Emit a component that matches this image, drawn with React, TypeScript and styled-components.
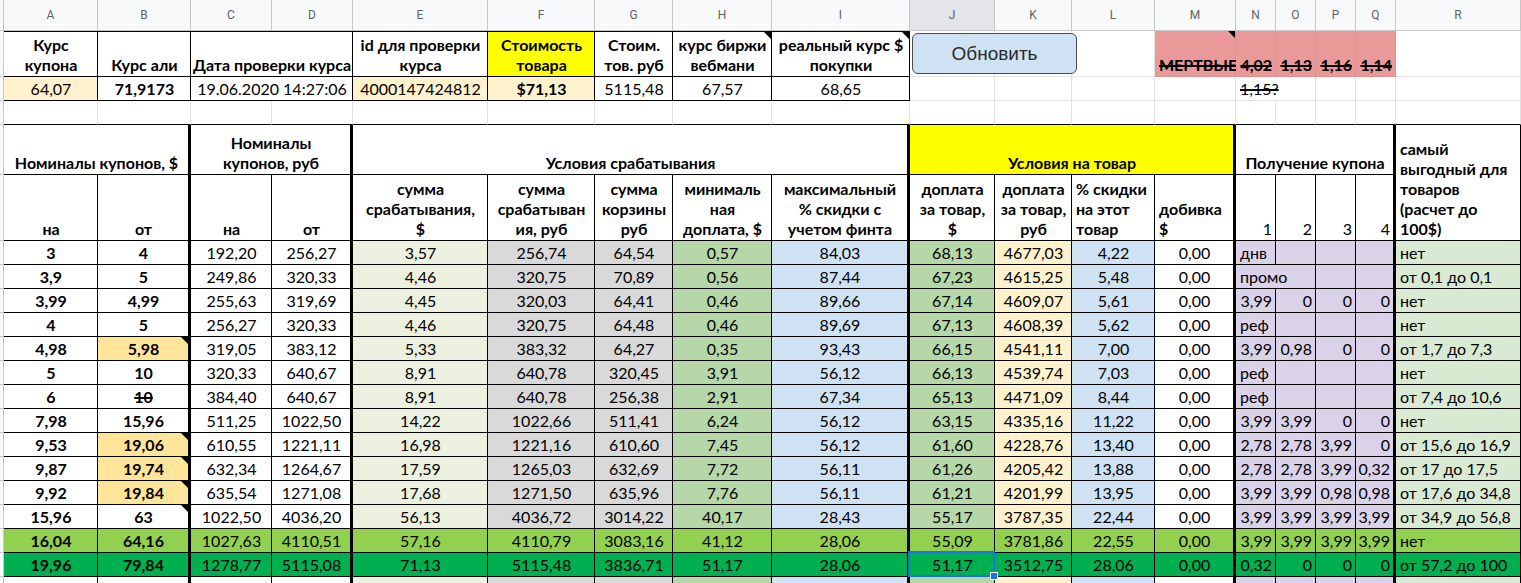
import React from "react";
import styled, { createGlobalStyle, css } from "styled-components";

const GlobalStyle = createGlobalStyle`
  html, body {
    margin: 0;
    padding: 0;
    background: #fff;
  }
  body {
    overflow: hidden;
    font-family: "Lato", "Open Sans", sans-serif;
  }
`;

// spreadsheet column widths: row-header strip + A..R
const WIDTHS = [4, 94, 93, 81, 81, 135, 107, 78, 99, 138, 85, 77, 83, 81, 40, 40, 40, 40, 125];
const LETTERS = "ABCDEFGHIJKLMNOPQR".split("");

const GRID = "#e2e2e2";
const INK = "#000";
const CREAM = "#fff2cc";
const HL = "#ffe599";

type Align = "left" | "center" | "right";

type CellProps = {
  $bg?: string;
  $align?: Align;
  $bold?: boolean;
  $strike?: boolean;
  $line?: string;
  $bottom?: string;
  $thick?: boolean;
  $span?: number;
  $rows?: number;
  $top?: boolean;
  $note?: boolean;
};

const Sheet = styled.div`
  position: relative;
  display: grid;
  grid-template-columns: ${WIDTHS.map((w) => `${w}px`).join(" ")};
  grid-template-rows: 31px 46px 24px 24px 50px 66px;
  grid-auto-rows: 24px;
  width: 1521px;
  height: 583px;
  overflow: hidden;
  font-family: "Lato", "Open Sans", sans-serif;
  font-size: 16px;
  color: ${INK};
`;

const ColHead = styled.div<{ $active?: boolean }>`
  display: flex;
  align-items: center;
  justify-content: center;
  box-sizing: border-box;
  background: ${(p) => (p.$active ? "#e3e5e8" : "#f8f9fa")};
  border-right: 1px solid #c7c7c7;
  border-bottom: 1px solid #c7c7c7;
  font-family: Roboto, "Liberation Sans", sans-serif;
  font-size: 12px;
  color: #5f6368;
`;

const Stub = styled.div`
  box-sizing: border-box;
  background: #f8f9fa;
  border-right: 1px solid #c7c7c7;
  border-bottom: 1px solid #c7c7c7;
`;

const Cell = styled.div<CellProps>`
  position: relative;
  box-sizing: border-box;
  grid-column: span ${(p) => p.$span ?? 1};
  grid-row: span ${(p) => p.$rows ?? 1};
  display: flex;
  align-items: flex-end;
  justify-content: ${(p) =>
    p.$align === "left" ? "flex-start" : p.$align === "right" ? "flex-end" : "center"};
  text-align: ${(p) => p.$align ?? "center"};
  padding: 0 3px 1px 4px;
  background: ${(p) => p.$bg ?? "#fff"};
  border-right: ${(p) => (p.$thick ? `3px solid ${INK}` : `1px solid ${p.$line ?? GRID}`)};
  border-bottom: 1px solid ${(p) => p.$bottom ?? p.$line ?? GRID};
  border-top: ${(p) => (p.$top ? `1px solid ${INK}` : "none")};
  font-weight: ${(p) => (p.$bold ? 700 : 400)};
  text-decoration: ${(p) => (p.$strike ? "line-through" : "none")};
  text-decoration-thickness: 1.5px;
  line-height: 20px;
  white-space: nowrap;
  ${(p) =>
    p.$note &&
    css`
      &::after {
        content: "";
        position: absolute;
        top: 0;
        right: 0;
        border-style: solid;
        border-width: 0 7px 7px 0;
        border-color: transparent ${INK} transparent transparent;
      }
    `}
`;

const Text = styled.span`
  display: block;
`;

const Selection = styled.div`
  position: absolute;
  top: -2px;
  left: -2px;
  right: -1px;
  bottom: -1px;
  z-index: 2;
  border: 2px solid #1a73e8;
  pointer-events: none;
  &::after {
    content: "";
    position: absolute;
    right: -5px;
    bottom: -5px;
    width: 6px;
    height: 6px;
    background: #1a73e8;
    border: 1px solid #fff;
  }
`;

const RefreshButton = styled.button`
  position: absolute;
  left: 912px;
  top: 33px;
  z-index: 3;
  width: 165px;
  height: 41px;
  box-sizing: border-box;
  border: 1.5px solid #4a4a4a;
  border-radius: 6px;
  background: #cfe2f3;
  font-family: "Liberation Sans", Arial, sans-serif;
  font-size: 19px;
  color: #2b2b2b;
  padding: 0;
`;

type Col = { bg: string; bold?: boolean; thick?: boolean; coupon?: boolean; align?: Align };

const COLS: Col[] = [
  { bg: "#fff", bold: true },
  { bg: "#fff", bold: true, thick: true },
  { bg: "#fff" },
  { bg: "#fff", thick: true },
  { bg: "#ebf1de" },
  { bg: "#d9d9d9" },
  { bg: "#d9d9d9" },
  { bg: "#b6d7a8" },
  { bg: "#cfe2f3", thick: true },
  { bg: "#b6d7a8" },
  { bg: CREAM },
  { bg: "#cfe2f3" },
  { bg: "#fff", thick: true },
  { bg: "#d9d2e9", coupon: true },
  { bg: "#d9d2e9", coupon: true },
  { bg: "#d9d2e9", coupon: true },
  { bg: "#d9d2e9", coupon: true, thick: true },
  { bg: "#d9ead3", align: "left" },
];

type Mark = { bg?: string; note?: boolean; strike?: boolean };
type Row = { v: string[]; mark?: Mark; bg?: string; merge?: boolean; selected?: number };

const yellowNote: Mark = { bg: HL, note: true };

const ROWS: Row[] = [
  { v: ["3", "4", "192,20", "256,27", "3,57", "256,74", "64,54", "0,57", "84,03", "68,13", "4677,03", "4,22", "0,00", "днв", "", "", "", "нет"] },
  { v: ["3,9", "5", "249,86", "320,33", "4,46", "320,75", "70,89", "0,56", "87,44", "67,23", "4615,25", "5,48", "0,00", "промо", "", "", "", "от 0,1 до 0,1"], merge: true },
  { v: ["3,99", "4,99", "255,63", "319,69", "4,45", "320,03", "64,41", "0,46", "89,66", "67,14", "4609,07", "5,61", "0,00", "3,99", "0", "0", "0", "нет"] },
  { v: ["4", "5", "256,27", "320,33", "4,46", "320,75", "64,48", "0,46", "89,69", "67,13", "4608,39", "5,62", "0,00", "реф", "", "", "", "нет"] },
  { v: ["4,98", "5,98", "319,05", "383,12", "5,33", "383,32", "64,27", "0,35", "93,43", "66,15", "4541,11", "7,00", "0,00", "3,99", "0,98", "0", "0", "от 1,7 до 7,3"], mark: yellowNote },
  { v: ["5", "10", "320,33", "640,67", "8,91", "640,78", "320,45", "3,91", "56,12", "66,13", "4539,74", "7,03", "0,00", "реф", "", "", "", "нет"] },
  { v: ["6", "10", "384,40", "640,67", "8,91", "640,78", "256,38", "2,91", "67,34", "65,13", "4471,09", "8,44", "0,00", "реф", "", "", "", "от 7,4 до 10,6"], mark: { strike: true } },
  { v: ["7,98", "15,96", "511,25", "1022,50", "14,22", "1022,66", "511,41", "6,24", "56,12", "63,15", "4335,16", "11,22", "0,00", "3,99", "3,99", "0", "0", "нет"] },
  { v: ["9,53", "19,06", "610,55", "1221,11", "16,98", "1221,16", "610,60", "7,45", "56,12", "61,60", "4228,76", "13,40", "0,00", "2,78", "2,78", "3,99", "0", "от 15,6 до 16,9"], mark: yellowNote },
  { v: ["9,87", "19,74", "632,34", "1264,67", "17,59", "1265,03", "632,69", "7,72", "56,11", "61,26", "4205,42", "13,88", "0,00", "2,78", "2,78", "3,99", "0,32", "от 17 до 17,5"], mark: yellowNote },
  { v: ["9,92", "19,84", "635,54", "1271,08", "17,68", "1271,50", "635,96", "7,76", "56,11", "61,21", "4201,99", "13,95", "0,00", "3,99", "3,99", "0,98", "0,98", "от 17,6 до 34,8"], mark: yellowNote },
  { v: ["15,96", "63", "1022,50", "4036,20", "56,13", "4036,72", "3014,22", "40,17", "28,43", "55,17", "3787,35", "22,44", "0,00", "3,99", "3,99", "3,99", "3,99", "от 34,9 до 56,8"], mark: { note: true } },
  { v: ["16,04", "64,16", "1027,63", "4110,51", "57,16", "4110,79", "3083,16", "41,12", "28,06", "55,09", "3781,86", "22,55", "0,00", "3,99", "3,99", "3,99", "3,99", "нет"], bg: "#92d050" },
  { v: ["19,96", "79,84", "1278,77", "5115,08", "71,13", "5115,48", "3836,71", "51,17", "28,06", "51,17", "3512,75", "28,06", "0,00", "0,32", "0", "0", "0", "от 57,2 до 100"], bg: "#00b050", selected: 9 },
  { v: Array(18).fill("") },
];

const isNumber = (s: string) => /^[\d,]+$/.test(s);

const DataRow: React.FC<{ row: Row }> = ({ row }) => {
  const cells: React.ReactNode[] = [<Stub key="stub" />];
  for (let c = 0; c < COLS.length; c++) {
    const col = COLS[c];
    const val = row.v[c];
    const span = row.merge && c === 13 ? 2 : 1;
    const mark = c === 1 ? row.mark : undefined;
    const align: Align = col.coupon ? (isNumber(val) ? "right" : "left") : col.align ?? "center";
    cells.push(
      <Cell
        key={c}
        $span={span}
        $bg={row.bg ?? mark?.bg ?? col.bg}
        $align={align}
        $bold={col.bold}
        $strike={mark?.strike}
        $note={mark?.note}
        $line={INK}
        $thick={col.thick}
      >
        <Text>{val}</Text>
        {row.selected === c && <Selection />}
      </Cell>
    );
    c += span - 1;
  }
  return <>{cells}</>;
};

const App: React.FC = () => {
  return (
    <>
      <GlobalStyle />
      <Sheet>
        {/* column letters */}
        <Stub />
        {LETTERS.map((l) => (
          <ColHead key={l} $active={l === "J"}>
            {l}
          </ColHead>
        ))}

        {/* row 1: rate headers */}
        <Stub />
        <Cell $line={INK} $top $bold><Text>Курс<br />купона</Text></Cell>
        <Cell $line={INK} $top $bold><Text>Курс али</Text></Cell>
        <Cell $line={INK} $top $bold $span={2}><Text>Дата проверки курса</Text></Cell>
        <Cell $line={INK} $top $bold><Text>id для проверки<br />курса</Text></Cell>
        <Cell $line={INK} $top $bold $bg="#ffff00"><Text>Стоимость<br />товара</Text></Cell>
        <Cell $line={INK} $top $bold><Text>Стоим.<br />тов. руб</Text></Cell>
        <Cell $line={INK} $top $bold $note><Text>курс биржи<br />вебмани</Text></Cell>
        <Cell $line={INK} $top $bold $note><Text>реальный курс $<br />покупки</Text></Cell>
        <Cell />
        <Cell />
        <Cell />
        <Cell $bg="#ea9999" $line="#dd9090" $bold $strike $note $align="left"><Text>МЕРТВЫЕ</Text></Cell>
        <Cell $bg="#ea9999" $line="#dd9090" $bold $strike $align="right"><Text>4,02</Text></Cell>
        <Cell $bg="#ea9999" $line="#dd9090" $bold $strike $align="right"><Text>1,13</Text></Cell>
        <Cell $bg="#ea9999" $line="#dd9090" $bold $strike $align="right"><Text>1,16</Text></Cell>
        <Cell $bg="#ea9999" $line="#dd9090" $bold $strike $align="right"><Text>1,14</Text></Cell>
        <Cell />

        {/* row 2: rate values */}
        <Stub />
        <Cell $line={INK} $bg={CREAM}><Text>64,07</Text></Cell>
        <Cell $line={INK} $bold><Text>71,9173</Text></Cell>
        <Cell $line={INK} $span={2}><Text>19.06.2020 14:27:06</Text></Cell>
        <Cell $line={INK} $bg={CREAM}><Text>4000147424812</Text></Cell>
        <Cell $line={INK} $bg={CREAM} $bold><Text>$71,13</Text></Cell>
        <Cell $line={INK}><Text>5115,48</Text></Cell>
        <Cell $line={INK}><Text>67,57</Text></Cell>
        <Cell $line={INK}><Text>68,65</Text></Cell>
        <Cell />
        <Cell />
        <Cell />
        <Cell />
        <Cell $span={2} $align="left" $strike><Text>1,15?</Text></Cell>
        <Cell />
        <Cell />
        <Cell />

        {/* row 3: spacer */}
        <Stub />
        {LETTERS.map((l) => (
          <Cell key={`gap-${l}`} $bottom={INK} />
        ))}

        {/* row 4: group headers */}
        <Stub />
        <Cell $line={INK} $bold $span={2} $thick><Text>Номиналы купонов, $</Text></Cell>
        <Cell $line={INK} $bold $span={2} $thick><Text>Номиналы<br />купонов, руб</Text></Cell>
        <Cell $line={INK} $bold $span={5} $thick><Text>Условия срабатывания</Text></Cell>
        <Cell $line={INK} $bold $span={4} $thick $bg="#ffff00"><Text>Условия на товар</Text></Cell>
        <Cell $line={INK} $bold $span={4} $thick><Text>Получение купона</Text></Cell>
        <Cell $line={INK} $bold $rows={2} $align="left">
          <Text>самый<br />выгодный для<br />товаров<br />(расчет до<br />100$)</Text>
        </Cell>

        {/* row 5: column headers */}
        <Stub />
        <Cell $line={INK} $bold><Text>на</Text></Cell>
        <Cell $line={INK} $bold $thick><Text>от</Text></Cell>
        <Cell $line={INK} $bold><Text>на</Text></Cell>
        <Cell $line={INK} $bold $thick><Text>от</Text></Cell>
        <Cell $line={INK} $bold><Text>сумма<br />срабатывания,<br />$</Text></Cell>
        <Cell $line={INK} $bold><Text>сумма<br />срабатыван<br />ия, руб</Text></Cell>
        <Cell $line={INK} $bold><Text>сумма<br />корзины<br />руб</Text></Cell>
        <Cell $line={INK} $bold><Text>минималь<br />ная<br />доплата, $</Text></Cell>
        <Cell $line={INK} $bold $thick><Text>максимальный<br />% скидки с<br />учетом финта</Text></Cell>
        <Cell $line={INK} $bold><Text>доплата<br />за товар,<br />$</Text></Cell>
        <Cell $line={INK} $bold><Text>доплата<br />за товар,<br />руб</Text></Cell>
        <Cell $line={INK} $bold $align="left"><Text>% скидки<br />на этот<br />товар</Text></Cell>
        <Cell $line={INK} $bold $thick $align="left"><Text>добивка<br />$</Text></Cell>
        <Cell $line={INK} $align="right"><Text>1</Text></Cell>
        <Cell $line={INK} $align="right"><Text>2</Text></Cell>
        <Cell $line={INK} $align="right"><Text>3</Text></Cell>
        <Cell $line={INK} $align="right" $thick><Text>4</Text></Cell>

        {/* data */}
        {ROWS.map((row, i) => (
          <DataRow key={i} row={row} />
        ))}

        <RefreshButton>Обновить</RefreshButton>
      </Sheet>
    </>
  );
};

export default App;
